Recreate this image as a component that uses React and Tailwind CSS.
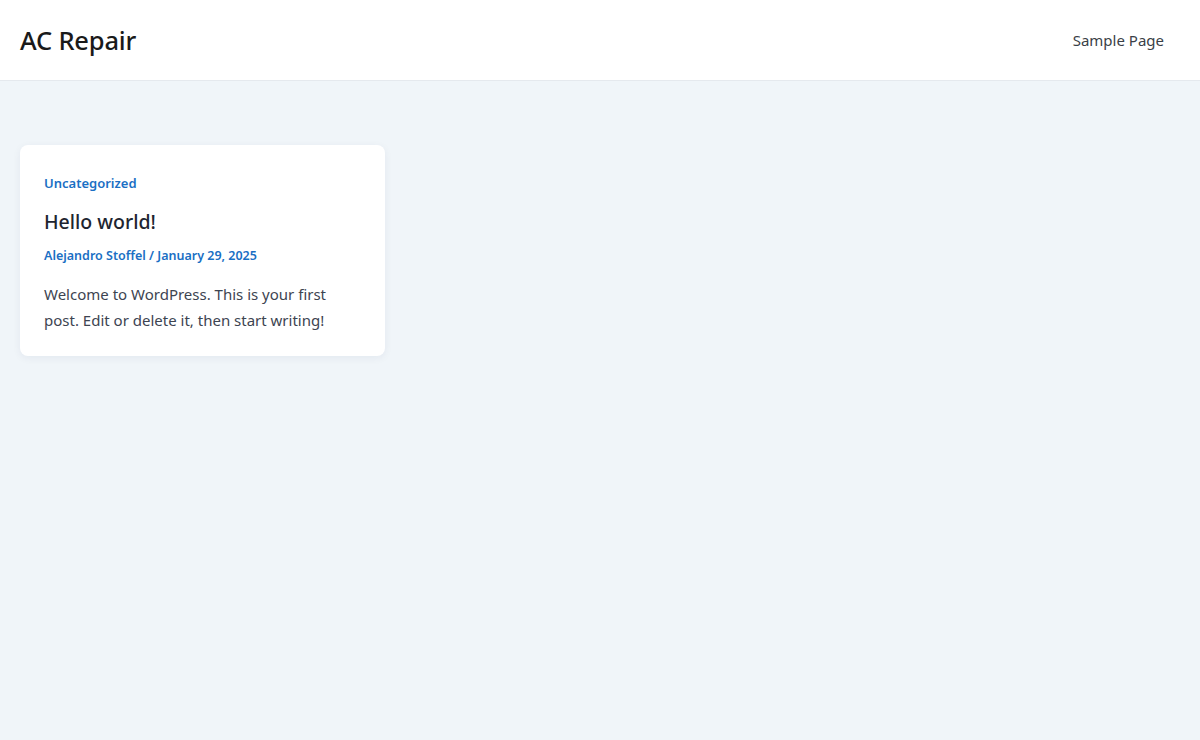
import React from "react";

const posts = [
  {
    id: 1,
    category: "Uncategorized",
    title: "Hello world!",
    author: "Alejandro Stoffel",
    date: "January 29, 2025",
    excerpt: "Welcome to WordPress. This is your first post. Edit or delete it, then start writing!",
  },
];

export default function App() {
  return (
    <div className="min-h-screen bg-[#f0f5f9] font-['Noto_Sans',sans-serif] text-[#1e293b]">
      {/* HEADER */}
      <header className="bg-white border-b border-[#e5e9ee] h-[81px]">
        <div className="h-full px-5 flex items-center justify-between">
          <a className="text-[25.5px] font-medium text-[#1a1a1a] tracking-[-0.2px]">AC Repair</a>
          <nav className="pr-[16px]">
            <a className="text-[15px] text-[#3a3f47]">Sample Page</a>
          </nav>
        </div>
      </header>

      {/* POSTS GRID */}
      <main className="px-5 pt-16">
        <div className="grid grid-cols-3 gap-[32px]">
          {posts.map((post) => (
            <article
              key={post.id}
              className="bg-white rounded-lg px-6 pt-[29px] pb-[23px] shadow-[0_2px_8px_rgba(15,40,80,0.06)]"
            >
              <div className="text-[13px] font-semibold text-[#1a6fc4] leading-[18px]">{post.category}</div>
              <h2 className="mt-[18px] text-[19.5px] font-medium text-[#1e2530] leading-[24px]">{post.title}</h2>
              <div className="mt-[13px] text-[12.5px] font-semibold text-[#1a6fc4] leading-[18px]">
                {post.author} / {post.date}
              </div>
              <p className="mt-[16px] text-[15px] text-[#3d4451] leading-[26px]">{post.excerpt}</p>
            </article>
          ))}
        </div>
      </main>
    </div>
  );
}
